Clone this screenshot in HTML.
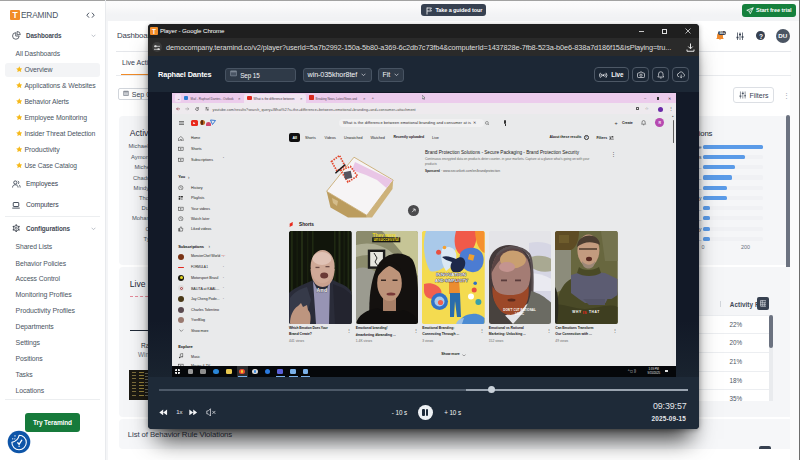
<!DOCTYPE html>
<html lang="en"><head><meta charset="utf-8"><title>Teramind - Player</title>
<style>
html,body{margin:0;padding:0}
body{width:800px;height:460px;overflow:hidden;position:relative;background:#fff;font-family:"Liberation Sans", sans-serif;}
div,span,svg{position:absolute;box-sizing:border-box}
span{white-space:nowrap;line-height:1.12}
</style></head>
<body>
<div style="left:0px;top:0px;width:800px;height:460px;background:#ffffff;"></div>
<div style="left:105.5px;top:0px;width:694.5px;height:460px;background:#f4f5f7;"></div>
<div style="left:108px;top:20.5px;width:682px;height:440px;background:#ffffff;"></div>
<div style="left:790px;top:20.5px;width:10px;height:440px;background:#fbfbfc;"></div>
<div style="left:105.5px;top:0px;width:694.5px;height:20.5px;background:linear-gradient(#fcfcfd 0,#f9f9fa 35%,#f2f3f5 70%,#f2f3f5 100%);"></div>
<div style="left:0px;top:0px;width:800px;height:1px;background:#a2a2a2;"></div>
<div style="left:799.2px;top:0px;width:0.8px;height:460px;background:#6e6e6e;"></div>
<div style="left:104.5px;top:0px;width:1px;height:460px;background:#e8eaed;"></div>
<div style="left:420.7px;top:4px;width:65.5px;height:12.3px;background:#374151;border-radius:3px;"></div>
<svg style="left:426px;top:6.5px" width="7" height="8" viewBox="0 0 14 16"><path d="M2 1v14M2 2h9l-2.5 3L11 8H2" fill="none" stroke="#fff" stroke-width="1.6"/></svg>
<span style="top:7.18px;font-size:5.5px;color:#ffffff;font-weight:700;left:435.4px;letter-spacing:-0.081px;">Take a guided tour</span>
<div style="left:741.8px;top:4px;width:53.8px;height:12.5px;background:#15803d;border-radius:3px;"></div>
<svg style="left:746px;top:6.5px" width="8" height="8" viewBox="0 0 16 16"><path d="M14.5 1.5L1.5 6.5l5 2 2 5z M6.5 8.5l8-7" fill="none" stroke="#fff" stroke-width="1.5" stroke-linejoin="round"/></svg>
<span style="top:7.23px;font-size:5.63px;color:#ffffff;font-weight:700;left:756px;letter-spacing:-0.069px;">Start free trial</span>
<div style="left:10px;top:9.6px;width:10px;height:10px;background:#f28c28;border-radius:1px;"></div>
<span style="top:10.79px;font-size:8.5px;color:#ffffff;font-weight:700;left:12.6px;">T</span>
<span style="top:10.92px;font-size:8.28px;color:#4b5563;left:21px;letter-spacing:-0.163px;">ERAMIND</span>
<svg style="left:85.5px;top:11.5px" width="9" height="6.4" viewBox="0 0 18 13"><path d="M6 1.5L1.5 6.5 6 11.5M12 1.5l4.5 5-4.5 5" fill="none" stroke="#374151" stroke-width="1.8"/></svg>
<svg style="left:12px;top:30.8px" width="8.8" height="8.8" viewBox="0 0 16 16"><path d="M6.8 3A6 6 0 1013 9.2H6.8z" fill="none" stroke="#454b56" stroke-width="1.5" stroke-linejoin="round"/><path d="M9.3 0.9v5.8h5.8A5.8 5.8 0 009.3 0.9z" fill="none" stroke="#454b56" stroke-width="1.5" stroke-linejoin="round"/></svg>
<span style="top:32.46px;font-size:6.31px;color:#454b56;font-weight:700;left:26px;letter-spacing:-0.109px;">Dashboards</span>
<svg style="left:90.6px;top:33.6px" width="5" height="3.4" viewBox="0 0 10 7"><path d="M1 1.5l4 4 4-4" fill="none" stroke="#9ca3af" stroke-width="1.4"/></svg>
<span style="top:50.02px;font-size:6.75px;color:#4b5563;left:15.6px;letter-spacing:-0.098px;">All Dashboards</span>
<div style="left:5px;top:63px;width:94.5px;height:13.6px;background:#f3f4f6;border-radius:3px;"></div>
<svg style="left:15.6px;top:66.19999999999999px" width="6.6" height="6.3" viewBox="0 0 20 19"><path d="M10 0.5l2.9 6 6.6 0.9-4.8 4.6 1.2 6.5L10 15.4 4.1 18.5l1.2-6.5L0.5 7.4l6.6-0.9z" fill="#f6b91a"/></svg>
<span style="top:66.42px;font-size:6.92px;color:#4b5563;left:24.4px;letter-spacing:-0.108px;">Overview</span>
<svg style="left:15.6px;top:82.19999999999999px" width="6.6" height="6.3" viewBox="0 0 20 19"><path d="M10 0.5l2.9 6 6.6 0.9-4.8 4.6 1.2 6.5L10 15.4 4.1 18.5l1.2-6.5L0.5 7.4l6.6-0.9z" fill="#f6b91a"/></svg>
<span style="top:82.46px;font-size:6.85px;color:#4b5563;left:24.4px;letter-spacing:-0.096px;">Applications &amp; Websites</span>
<svg style="left:15.6px;top:98px" width="6.6" height="6.3" viewBox="0 0 20 19"><path d="M10 0.5l2.9 6 6.6 0.9-4.8 4.6 1.2 6.5L10 15.4 4.1 18.5l1.2-6.5L0.5 7.4l6.6-0.9z" fill="#f6b91a"/></svg>
<span style="top:98.27px;font-size:6.83px;color:#4b5563;left:24.4px;letter-spacing:-0.092px;">Behavior Alerts</span>
<svg style="left:15.6px;top:114px" width="6.6" height="6.3" viewBox="0 0 20 19"><path d="M10 0.5l2.9 6 6.6 0.9-4.8 4.6 1.2 6.5L10 15.4 4.1 18.5l1.2-6.5L0.5 7.4l6.6-0.9z" fill="#f6b91a"/></svg>
<span style="top:114.25px;font-size:6.87px;color:#4b5563;left:24.4px;letter-spacing:-0.102px;">Employee Monitoring</span>
<svg style="left:15.6px;top:130px" width="6.6" height="6.3" viewBox="0 0 20 19"><path d="M10 0.5l2.9 6 6.6 0.9-4.8 4.6 1.2 6.5L10 15.4 4.1 18.5l1.2-6.5L0.5 7.4l6.6-0.9z" fill="#f6b91a"/></svg>
<span style="top:130.25px;font-size:6.87px;color:#4b5563;left:24.4px;letter-spacing:-0.091px;">Insider Threat Detection</span>
<svg style="left:15.6px;top:146px" width="6.6" height="6.3" viewBox="0 0 20 19"><path d="M10 0.5l2.9 6 6.6 0.9-4.8 4.6 1.2 6.5L10 15.4 4.1 18.5l1.2-6.5L0.5 7.4l6.6-0.9z" fill="#f6b91a"/></svg>
<span style="top:146.18px;font-size:7px;color:#4b5563;left:24.4px;letter-spacing:-0.082px;">Productivity</span>
<svg style="left:15.6px;top:161.79999999999998px" width="6.6" height="6.3" viewBox="0 0 20 19"><path d="M10 0.5l2.9 6 6.6 0.9-4.8 4.6 1.2 6.5L10 15.4 4.1 18.5l1.2-6.5L0.5 7.4l6.6-0.9z" fill="#f6b91a"/></svg>
<span style="top:162.16px;font-size:6.68px;color:#4b5563;left:24.4px;letter-spacing:-0.102px;">Use Case Catalog</span>
<svg style="left:12.2px;top:180px" width="8.6" height="8" viewBox="0 0 17 16"><circle cx="6.5" cy="5" r="3.2" fill="none" stroke="#3f4957" stroke-width="1.8"/><path d="M1 15c0-3.5 2.4-5.5 5.5-5.5S12 11.5 12 15M11.5 2a3.2 3.2 0 010 6M14 9.8c1.4.8 2.2 2.4 2.2 5.2" fill="none" stroke="#3f4957" stroke-width="1.8"/></svg>
<span style="top:179.96px;font-size:6.67px;color:#374151;left:26px;letter-spacing:-0.11px;">Employees</span>
<svg style="left:12.4px;top:201.6px" width="8" height="7" viewBox="0 0 16 14"><rect x="2.5" y="1" width="11" height="8" rx="1" fill="none" stroke="#3f4957" stroke-width="1.9"/><path d="M0.5 12.2h15" stroke="#3f4957" stroke-width="1.9"/></svg>
<span style="top:201.05px;font-size:6.87px;color:#374151;left:26px;letter-spacing:-0.112px;">Computers</span>
<div style="left:5px;top:216px;width:94.5px;height:0.8px;background:#eceef0;"></div>
<svg style="left:12.2px;top:224px" width="8.4" height="8.4" viewBox="0 0 16 16"><g fill="none" stroke="#454b56" stroke-width="1.5"><circle cx="8" cy="8" r="5"/><circle cx="8" cy="8" r="2"/></g><g fill="#454b56"><rect x="6.7" y="0.5" width="2.6" height="3" rx="0.7" transform="rotate(0 8 8)"/><rect x="6.7" y="0.5" width="2.6" height="3" rx="0.7" transform="rotate(60 8 8)"/><rect x="6.7" y="0.5" width="2.6" height="3" rx="0.7" transform="rotate(120 8 8)"/><rect x="6.7" y="0.5" width="2.6" height="3" rx="0.7" transform="rotate(180 8 8)"/><rect x="6.7" y="0.5" width="2.6" height="3" rx="0.7" transform="rotate(240 8 8)"/><rect x="6.7" y="0.5" width="2.6" height="3" rx="0.7" transform="rotate(300 8 8)"/></g></svg>
<span style="top:225.02px;font-size:6.38px;color:#454b56;font-weight:700;left:26px;letter-spacing:-0.097px;">Configurations</span>
<svg style="left:90.6px;top:226.8px" width="5" height="3.4" viewBox="0 0 10 7"><path d="M1 1.5l4 4 4-4" fill="none" stroke="#9ca3af" stroke-width="1.4"/></svg>
<span style="top:243.22px;font-size:6.75px;color:#4b5563;left:15.6px;letter-spacing:-0.094px;">Shared Lists</span>
<span style="top:259.51px;font-size:6.77px;color:#4b5563;left:15.6px;letter-spacing:-0.092px;">Behavior Policies</span>
<span style="top:275.28px;font-size:6.81px;color:#4b5563;left:15.6px;letter-spacing:-0.098px;">Access Control</span>
<span style="top:291.2px;font-size:6.97px;color:#4b5563;left:15.6px;letter-spacing:-0.091px;">Monitoring Profiles</span>
<span style="top:306.8px;font-size:6.97px;color:#4b5563;left:15.6px;letter-spacing:-0.087px;">Productivity Profiles</span>
<span style="top:323.47px;font-size:6.84px;color:#4b5563;left:15.6px;letter-spacing:-0.107px;">Departments</span>
<span style="top:339.4px;font-size:6.96px;color:#4b5563;left:15.6px;letter-spacing:-0.094px;">Settings</span>
<span style="top:355.46px;font-size:6.86px;color:#4b5563;left:15.6px;letter-spacing:-0.093px;">Positions</span>
<span style="top:371.46px;font-size:6.85px;color:#4b5563;left:15.6px;letter-spacing:-0.105px;">Tasks</span>
<span style="top:387.37px;font-size:6.84px;color:#4b5563;left:15.6px;letter-spacing:-0.098px;">Locations</span>
<div style="left:5px;top:398.6px;width:94.5px;height:0.8px;background:#eceef0;"></div>
<div style="left:24.9px;top:413px;width:55.2px;height:18.8px;background:#167a3b;border-radius:3px;"></div>
<span style="top:418.87px;font-size:6.48px;color:#ffffff;font-weight:700;left:33px;letter-spacing:-0.101px;">Try Teramind</span>
<svg style="left:6.5px;top:429.7px" width="24" height="24" viewBox="0 0 48 48"><circle cx="24" cy="24" r="22.6" fill="#0e55a8"/><path d="M24.3 10.6C23 16.5 19 22.2 9.8 24.8A14.4 14.4 0 1024.3 10.6z" fill="none" stroke="#fff" stroke-width="2.2" stroke-linejoin="round"/><path d="M21.5 25.5l2.7 3.3 5.4-8.4" fill="none" stroke="#fff" stroke-width="2.5" stroke-linecap="round" stroke-linejoin="round"/><circle cx="24.2" cy="32.5" r="1.4" fill="#fff"/><rect x="14.8" y="10.6" width="2.4" height="2.4" fill="#fff"/><rect x="10.3" y="16.6" width="2.2" height="2.2" fill="#fff"/><rect x="14.6" y="16.8" width="2" height="2" fill="#fff"/></svg>
<span style="top:32.03px;font-size:7.86px;color:#374151;left:117px;letter-spacing:-0.127px;">Dashboards</span>
<svg style="left:715.5px;top:31.6px" width="9" height="8.4" viewBox="0 0 18 17"><path d="M8 1.5a6 6 0 00-6 6v3.5l-1.5 3h15L14 11V7.5a6 6 0 00-6-6z" fill="#f0892b"/><path d="M5.8 15a2.3 2.3 0 004.4 0z" fill="#f0892b"/></svg>
<div style="left:718px;top:30.9px;width:8.3px;height:4.4px;background:#374151;border-radius:2.2px;"></div>
<span style="top:31.63px;font-size:3.2px;color:#ffffff;font-weight:700;left:719.6px;">50+</span>
<svg style="left:735.5px;top:31.5px" width="8" height="8.5" viewBox="0 0 16 17"><path d="M3 1v15M8 1v15M13 1v15" stroke="#374151" stroke-width="1.5"/><path d="M1 11h4M6 5h4M11 10h4" stroke="#374151" stroke-width="2.6"/></svg>
<div style="left:756.2px;top:31.2px;width:9.2px;height:9.2px;background:#374151;border-radius:50%;"></div>
<span style="top:32.86px;font-size:6.6px;color:#ffffff;font-weight:700;left:758.9px;">?</span>
<div style="left:775.7px;top:28.7px;width:14.2px;height:14.2px;background:#4b5563;border-radius:50%;"></div>
<span style="top:33.05px;font-size:6.2px;color:#ffffff;font-weight:700;left:778.2px;letter-spacing:0.131px;">DU</span>
<div style="left:116px;top:50.8px;width:675px;height:0.8px;background:#e5e7eb;"></div>
<span style="top:59.48px;font-size:7px;color:#374151;left:122px;letter-spacing:0.032px;">Live Activity</span>
<div style="left:116px;top:74.6px;width:675px;height:0.7px;background:#e9ebee;"></div>
<div style="left:121px;top:74.1px;width:32px;height:1.1px;background:#f28c28;"></div>
<div style="left:118px;top:87.5px;width:60px;height:12.8px;background:#ffffff;border:0.7px solid #d1d5db;border-radius:2px;"></div>
<svg style="left:123px;top:90.4px" width="6" height="6.2" viewBox="0 0 12 12.4"><rect x="0.5" y="1.5" width="11" height="10.4" rx="1.5" fill="#8b9099"/><rect x="1.8" y="4.6" width="8.4" height="6" fill="#c9ccd1"/></svg>
<span style="top:90.98px;font-size:7px;color:#374151;left:131.8px;">Sep 09</span>
<div style="left:732.5px;top:87.4px;width:41.4px;height:15.6px;background:#ffffff;border:0.7px solid #dcdfe4;border-radius:3px;"></div>
<svg style="left:738.5px;top:91.2px" width="7.6" height="8" viewBox="0 0 16 17"><path d="M3 1v15M8 1v15M13 1v15" stroke="#4b5563" stroke-width="1.3"/><path d="M1 11h4M6 5h4M11 10h4" stroke="#4b5563" stroke-width="2.4"/></svg>
<span style="top:92.08px;font-size:7px;color:#374151;left:749.6px;letter-spacing:-0.037px;">Filters</span>
<span style="top:91.78px;font-size:7px;color:#9ca3af;left:783.2px;">⋮</span>
<div style="left:118.5px;top:116px;width:671.5px;height:148.5px;background:#f5f6f8;border-radius:4px 0 0 4px;"></div>
<span style="top:129.04px;font-size:8.6px;color:#1f2937;left:129.8px;">Activity</span>
<span style="top:143.13px;font-size:5.8px;color:#4b5563;left:128.5px;">Michael</span>
<span style="top:154.33px;font-size:5.8px;color:#4b5563;left:131px;">Aymon</span>
<span style="top:164.33px;font-size:5.8px;color:#4b5563;left:134.5px;">Michelle</span>
<span style="top:174.53px;font-size:5.8px;color:#4b5563;left:133px;">Chadwick</span>
<span style="top:184.83px;font-size:5.8px;color:#4b5563;left:133.6px;">Mindy</span>
<span style="top:194.93px;font-size:5.8px;color:#4b5563;left:139px;">Thomas</span>
<span style="top:204.93px;font-size:5.8px;color:#4b5563;left:141.5px;">Duke</span>
<span style="top:215.33px;font-size:5.8px;color:#4b5563;left:132px;">Mohanad</span>
<span style="top:225.73px;font-size:5.8px;color:#4b5563;left:145.5px;">Olivia</span>
<span style="top:235.93px;font-size:5.8px;color:#4b5563;left:143.6px;">Tyler</span>
<span style="top:129.72px;font-size:7.73px;color:#1f2937;left:672px;letter-spacing:-0.104px;">Applications</span>
<div style="left:703px;top:144.5px;width:60px;height:4.2px;background:#f0f1f4;border-radius:1.5px;"></div>
<div style="left:703px;top:144.5px;width:60px;height:4.2px;background:#5b9be8;border-radius:1.5px;"></div>
<div style="left:703px;top:154.9px;width:60px;height:4.2px;background:#f0f1f4;border-radius:1.5px;"></div>
<div style="left:703px;top:154.9px;width:42px;height:4.2px;background:#5b9be8;border-radius:1.5px;"></div>
<div style="left:703px;top:164.9px;width:60px;height:4.2px;background:#f0f1f4;border-radius:1.5px;"></div>
<div style="left:703px;top:164.9px;width:32px;height:4.2px;background:#5b9be8;border-radius:1.5px;"></div>
<div style="left:703px;top:175.4px;width:60px;height:4.2px;background:#f0f1f4;border-radius:1.5px;"></div>
<div style="left:703px;top:175.4px;width:29px;height:4.2px;background:#5b9be8;border-radius:1.5px;"></div>
<div style="left:703px;top:185.5px;width:60px;height:4.2px;background:#f0f1f4;border-radius:1.5px;"></div>
<div style="left:703px;top:185.5px;width:24px;height:4.2px;background:#5b9be8;border-radius:1.5px;"></div>
<div style="left:703px;top:195.9px;width:60px;height:4.2px;background:#f0f1f4;border-radius:1.5px;"></div>
<div style="left:703px;top:195.9px;width:24px;height:4.2px;background:#5b9be8;border-radius:1.5px;"></div>
<div style="left:703px;top:206.1px;width:60px;height:4.2px;background:#f0f1f4;border-radius:1.5px;"></div>
<div style="left:703px;top:206.1px;width:7px;height:4.2px;background:#5b9be8;border-radius:1.5px;"></div>
<div style="left:703px;top:216.3px;width:60px;height:4.2px;background:#f0f1f4;border-radius:1.5px;"></div>
<div style="left:703px;top:216.3px;width:7px;height:4.2px;background:#5b9be8;border-radius:1.5px;"></div>
<div style="left:703px;top:226.5px;width:60px;height:4.2px;background:#f0f1f4;border-radius:1.5px;"></div>
<div style="left:703px;top:226.5px;width:7px;height:4.2px;background:#5b9be8;border-radius:1.5px;"></div>
<div style="left:703px;top:236.70000000000002px;width:60px;height:4.2px;background:#f0f1f4;border-radius:1.5px;"></div>
<div style="left:703px;top:236.70000000000002px;width:7px;height:4.2px;background:#5b9be8;border-radius:1.5px;"></div>
<span style="top:144.02px;font-size:5.6px;color:#4b5563;right:98.39999999999998px;">Google Chrome</span>
<span style="top:154.42px;font-size:5.6px;color:#4b5563;right:98.39999999999998px;">Outlooks</span>
<span style="top:164.42px;font-size:5.6px;color:#4b5563;right:98.39999999999998px;">Microsoft Te...</span>
<span style="top:174.92px;font-size:5.6px;color:#4b5563;right:98.39999999999998px;">Visual Studi...</span>
<span style="top:185.02px;font-size:5.6px;color:#4b5563;right:98.39999999999998px;">Windows Exp...</span>
<span style="top:195.42px;font-size:5.6px;color:#4b5563;right:98.39999999999998px;">Spotify</span>
<span style="top:205.62px;font-size:5.6px;color:#4b5563;right:98.39999999999998px;">Adobe Acrob...</span>
<span style="top:215.82px;font-size:5.6px;color:#4b5563;right:98.39999999999998px;">Microsoft Ex...</span>
<span style="top:226.02px;font-size:5.6px;color:#4b5563;right:98.39999999999998px;">Notepady</span>
<span style="top:236.22px;font-size:5.6px;color:#4b5563;right:98.39999999999998px;">Zoom Meeti...</span>
<span style="top:243.82px;font-size:5.4px;color:#6b7280;left:701.6px;">0</span>
<span style="top:243.82px;font-size:5.4px;color:#6b7280;left:741px;">200</span>
<div style="left:786px;top:115px;width:3.6px;height:175px;background:#6b7280;border-radius:2px;"></div>
<div style="left:118.5px;top:267px;width:671.5px;height:149.5px;background:#f5f6f8;border-radius:4px 0 0 4px;"></div>
<span style="top:280.04px;font-size:8.6px;color:#1f2937;left:129.8px;">Live Montage</span>
<div style="left:130px;top:296.4px;width:250px;height:0.7px;background:transparent;border-top:0.7px dashed #e58a9a;"></div>
<div style="left:129.8px;top:329.5px;width:120px;height:1.1px;background:#1f2937;"></div>
<span style="top:341.56px;font-size:6.6px;color:#1f2937;left:141px;">Raphael Dantes</span>
<span style="top:350.86px;font-size:6.4px;color:#6b7280;left:138px;">Windows 10</span>
<div style="left:129.3px;top:369.5px;width:50px;height:30px;background:#1c1a14;"></div>
<div style="left:131.5px;top:372px;width:4px;height:0.8px;background:#7a6c3c;"></div>
<div style="left:139px;top:372px;width:5px;height:0.8px;background:#94803a;"></div>
<div style="left:145px;top:372.5px;width:3px;height:0.8px;background:#6a6a60;"></div>
<div style="left:131.5px;top:375px;width:4px;height:0.8px;background:#7a6c3c;"></div>
<div style="left:139px;top:375px;width:5px;height:0.8px;background:#94803a;"></div>
<div style="left:145px;top:375.5px;width:3px;height:0.8px;background:#6a6a60;"></div>
<div style="left:131.5px;top:378px;width:4px;height:0.8px;background:#7a6c3c;"></div>
<div style="left:139px;top:378px;width:5px;height:0.8px;background:#94803a;"></div>
<div style="left:145px;top:378.5px;width:3px;height:0.8px;background:#6a6a60;"></div>
<div style="left:131.5px;top:381.5px;width:4px;height:0.8px;background:#7a6c3c;"></div>
<div style="left:139px;top:381.5px;width:5px;height:0.8px;background:#94803a;"></div>
<div style="left:145px;top:382px;width:3px;height:0.8px;background:#6a6a60;"></div>
<div style="left:131.5px;top:384.5px;width:4px;height:0.8px;background:#7a6c3c;"></div>
<div style="left:139px;top:384.5px;width:5px;height:0.8px;background:#94803a;"></div>
<div style="left:145px;top:385px;width:3px;height:0.8px;background:#6a6a60;"></div>
<div style="left:131.5px;top:388px;width:4px;height:0.8px;background:#7a6c3c;"></div>
<div style="left:139px;top:388px;width:5px;height:0.8px;background:#94803a;"></div>
<div style="left:145px;top:388.5px;width:3px;height:0.8px;background:#6a6a60;"></div>
<div style="left:131.5px;top:391px;width:4px;height:0.8px;background:#7a6c3c;"></div>
<div style="left:139px;top:391px;width:5px;height:0.8px;background:#94803a;"></div>
<div style="left:145px;top:391.5px;width:3px;height:0.8px;background:#6a6a60;"></div>
<div style="left:131.5px;top:394.5px;width:4px;height:0.8px;background:#7a6c3c;"></div>
<div style="left:139px;top:394.5px;width:5px;height:0.8px;background:#94803a;"></div>
<div style="left:145px;top:395px;width:3px;height:0.8px;background:#6a6a60;"></div>
<div style="left:560px;top:314.5px;width:209px;height:86.5px;background:#ffffff;"></div>
<span style="top:301.1px;font-size:6.3px;color:#3f4856;font-weight:700;left:729.8px;letter-spacing:0.065px;">Activity Rate</span>
<div style="left:720.3px;top:300.5px;width:0.7px;height:6.5px;background:#d1d5db;"></div>
<div style="left:560px;top:314.5px;width:209px;height:0.7px;background:#eceef1;"></div>
<div style="left:560px;top:333px;width:209px;height:0.7px;background:#eceef1;"></div>
<div style="left:560px;top:351.8px;width:209px;height:0.7px;background:#eceef1;"></div>
<div style="left:560px;top:370.5px;width:209px;height:0.7px;background:#eceef1;"></div>
<div style="left:560px;top:389.2px;width:209px;height:0.7px;background:#eceef1;"></div>
<span style="top:320.9px;font-size:6.3px;color:#4b5563;left:729.5px;">22%</span>
<span style="top:339.3px;font-size:6.3px;color:#4b5563;left:729.5px;">20%</span>
<span style="top:357.9px;font-size:6.3px;color:#4b5563;left:729.5px;">21%</span>
<span style="top:376.6px;font-size:6.3px;color:#4b5563;left:729.5px;">18%</span>
<span style="top:395.1px;font-size:6.3px;color:#4b5563;left:729.5px;">35%</span>
<div style="left:756.8px;top:297px;width:12.6px;height:12.6px;background:#374151;border-radius:2px;"></div>
<svg style="left:759.8px;top:300px" width="6.6" height="6.6" viewBox="0 0 13 13"><rect x="0.7" y="0.7" width="11.6" height="11.6" rx="1" fill="none" stroke="#e5e7eb" stroke-width="1.3"/><path d="M0.7 4.5h11.6M0.7 8.5h11.6M4.5 0.7v11.6M8.5 4.5v7.8" stroke="#e5e7eb" stroke-width="1.1"/></svg>
<div style="left:769px;top:314.5px;width:3.6px;height:86.5px;background:#e9ebee;"></div>
<div style="left:769px;top:315px;width:3.6px;height:33px;background:#6b7280;border-radius:2px;"></div>
<div style="left:118.5px;top:419px;width:671.5px;height:29.8px;background:#f6f7f9;border-radius:4px 0 0 4px;"></div>
<span style="top:430.84px;font-size:7.79px;color:#374151;left:127.8px;letter-spacing:-0.101px;">List of Behavior Rule Violations</span>
<div style="left:758.7px;top:446.4px;width:12.8px;height:3px;background:#374151;border-radius:2px 2px 0 0;"></div>
<div style="left:147.5px;top:23.5px;width:551.3px;height:405.7px;border-radius:4px;box-shadow:0 18px 22px -8px rgba(0,0,0,.8),0 1px 5px rgba(0,0,0,.3);background:#111827;overflow:hidden">
<div style="left:0px;top:0px;width:551.3px;height:14.6px;background:#1f1f1f;"></div>
<div style="left:2.5px;top:3.3px;width:7.6px;height:8px;background:#f28c28;border-radius:1px;"></div>
<span style="top:4.43px;font-size:6.4px;color:#ffffff;font-weight:700;left:4.6px;">T</span>
<span style="top:4.77px;font-size:6.16px;color:#ffffff;left:12.5px;letter-spacing:-0.091px;">Player - Google Chrome</span>
<div style="left:491.1px;top:7.3px;width:5px;height:0.8px;background:#c8c8c8;"></div>
<div style="left:514.3px;top:5.1px;width:5.4px;height:5.4px;background:transparent;border:0.8px solid #e0e0e0;"></div>
<svg style="left:537.1px;top:4.8px" width="6" height="6" viewBox="0 0 12 12"><path d="M1 1l10 10M11 1L1 11" stroke="#ececec" stroke-width="1.5"/></svg>
<div style="left:0px;top:14.5px;width:551.3px;height:18px;background:#2a2a2a;"></div>
<div style="left:4px;top:18.9px;width:10px;height:10px;background:#3c3c3c;border-radius:50%;"></div>
<svg style="left:6px;top:21.1px" width="6" height="5.6" viewBox="0 0 12 11"><path d="M0 2.5h12M0 8.5h12" stroke="#dcdcdc" stroke-width="1.6"/><rect x="1" y="0.5" width="4" height="4" rx="1" fill="#dcdcdc"/><rect x="7" y="6.5" width="4" height="4" rx="1" fill="#dcdcdc"/></svg>
<span style="top:20.78px;font-size:7.34px;color:#dedede;left:18.5px;letter-spacing:-0.11px;">democompany.teramind.co/v2/player?userId=5a7b2992-150a-5b80-a369-6c2db7c73fb4&amp;computerId=1437828e-7fb8-523a-b0e6-838a7d186f15&amp;isPlaying=tru...</span>
<svg style="left:538.9px;top:19.8px" width="9" height="9" viewBox="0 0 18 18"><path d="M9 1v10M4.5 7L9 11.5 13.5 7M2 13v3.5h14V13" fill="none" stroke="#e8e8e8" stroke-width="2"/></svg>
<div style="left:0px;top:32.5px;width:551.3px;height:36.3px;background:#1c2735;"></div>
<span style="top:47.83px;font-size:7.35px;color:#ffffff;font-weight:700;left:10.5px;letter-spacing:-0.118px;">Raphael Dantes</span>
<div style="left:77.5px;top:44px;width:71px;height:14.3px;background:#2f3a48;border:0.7px solid #475362;border-radius:3px;"></div>
<svg style="left:82.5px;top:46.9px" width="7" height="6.6" viewBox="0 0 14 13"><rect x="0.5" y="1" width="13" height="11.5" rx="1.5" fill="#7d8794"/><rect x="2" y="4.6" width="10" height="6.4" fill="#4a5564"/></svg>
<span style="top:48.32px;font-size:6.36px;color:#f3f4f6;left:92.7px;letter-spacing:-0.109px;">Sep 15</span>
<div style="left:155.5px;top:44px;width:68.8px;height:14.3px;background:#2f3a48;border:0.7px solid #475362;border-radius:3px;"></div>
<span style="top:47.87px;font-size:7.18px;color:#f3f4f6;left:160.1px;letter-spacing:-0.102px;">win-035khor8tef</span>
<svg style="left:213.9px;top:49.9px" width="5" height="3.4" viewBox="0 0 10 7"><path d="M1 1.5l4 4 4-4" fill="none" stroke="#d1d5db" stroke-width="1.5"/></svg>
<div style="left:230.5px;top:44px;width:26.2px;height:14.3px;background:#2f3a48;border:0.7px solid #475362;border-radius:3px;"></div>
<span style="top:47.94px;font-size:7.05px;color:#f3f4f6;left:235.1px;letter-spacing:-0.078px;">Fit</span>
<svg style="left:246.9px;top:49.9px" width="5" height="3.4" viewBox="0 0 10 7"><path d="M1 1.5l4 4 4-4" fill="none" stroke="#d1d5db" stroke-width="1.5"/></svg>
<div style="left:446px;top:43.5px;width:35.6px;height:15.4px;background:transparent;border:0.8px solid #4d5866;border-radius:4px;"></div>
<svg style="left:451.7px;top:48.3px" width="8.4" height="6.6" viewBox="0 0 17 13"><circle cx="8.5" cy="6.5" r="2" fill="#e5e7eb"/><path d="M5.5 3.5a4.5 4.5 0 000 6M11.5 3.5a4.5 4.5 0 010 6M3 1.5a7.5 7.5 0 000 10M14 1.5a7.5 7.5 0 010 10" fill="none" stroke="#e5e7eb" stroke-width="1.7"/></svg>
<span style="top:47.74px;font-size:6.29px;color:#f3f4f6;font-weight:700;left:463.7px;letter-spacing:-0.094px;">Live</span>
<div style="left:484.9px;top:43.5px;width:16.8px;height:15.4px;background:transparent;border:0.8px solid #4d5866;border-radius:4px;"></div>
<svg style="left:489.3px;top:47.7px" width="8" height="7" viewBox="0 0 16 14"><path d="M2.5 4h2.3l1.2-2h4l1.2 2h2.3a1.5 1.5 0 011.5 1.5v6a1.5 1.5 0 01-1.5 1.5h-11A1.5 1.5 0 011 11.5v-6A1.5 1.5 0 012.5 4z" fill="none" stroke="#e5e7eb" stroke-width="1.4" stroke-linejoin="round"/><circle cx="8" cy="8.4" r="2.3" fill="none" stroke="#e5e7eb" stroke-width="1.4"/></svg>
<div style="left:504.9px;top:43.5px;width:16.8px;height:15.4px;background:transparent;border:0.8px solid #4d5866;border-radius:4px;"></div>
<svg style="left:509.5px;top:47.3px" width="7.6" height="8" viewBox="0 0 15 16"><path d="M7.5 1.5a4.5 4.5 0 00-4.5 4.5v3.5L1.5 12h12L12 9.5V6a4.5 4.5 0 00-4.5-4.5zM5.8 14h3.4" fill="none" stroke="#e5e7eb" stroke-width="1.4" stroke-linejoin="round"/></svg>
<div style="left:524.9px;top:43.5px;width:16.8px;height:15.4px;background:transparent;border:0.8px solid #4d5866;border-radius:4px;"></div>
<svg style="left:529.1px;top:47.5px" width="8.4" height="7.6" viewBox="0 0 17 15"><path d="M4.5 11.5a3.5 3.5 0 01-.5-7 4.5 4.5 0 018.7.8 3.2 3.2 0 01.3 6.2" fill="none" stroke="#e5e7eb" stroke-width="1.4"/><path d="M8.5 7v6.5M6.2 11.3l2.3 2.3 2.3-2.3" fill="none" stroke="#e5e7eb" stroke-width="1.4"/></svg>
<div style="left:0px;top:68.8px;width:551.3px;height:285px;background:linear-gradient(#121927 0,#121927 80%,#19232f 100%);"></div>
<div style="left:0px;top:353.5px;width:551.3px;height:53px;background:#1e2a38;"></div>
<div style="left:11px;top:365.2px;width:308px;height:1.9px;background:#4d5968;"></div>
<div style="left:318.5px;top:365.2px;width:222px;height:1.9px;background:#9aa4b0;"></div>
<div style="left:340.3px;top:362.5px;width:7.2px;height:7.2px;background:#c9d1da;border-radius:50%;"></div>
<svg style="left:11.7px;top:385.1px" width="8.4" height="6.8" viewBox="0 0 17 14"><path d="M8.5 1v12L0.5 7zM16.5 1v12L8.5 7z" fill="#f3f4f6"/></svg>
<span style="top:385.22px;font-size:6px;color:#e5e7eb;left:28.7px;">1x</span>
<svg style="left:41.9px;top:385.1px" width="8.4" height="6.8" viewBox="0 0 17 14"><path d="M0.5 1v12L8.5 7zM8.5 1v12L16.5 7z" fill="#f3f4f6"/></svg>
<svg style="left:58.5px;top:384.1px" width="10.4" height="8.8" viewBox="0 0 21 18"><path d="M1.5 6h3l4.5-4.5v15L4.5 12h-3z" fill="none" stroke="#e5e7eb" stroke-width="1.5" stroke-linejoin="round"/><path d="M13 6l6 6M19 6l-6 6" stroke="#e5e7eb" stroke-width="1.5"/></svg>
<span style="top:385.31px;font-size:6.31px;color:#f3f4f6;left:244.3px;letter-spacing:-0.079px;">- 10 s</span>
<div style="left:270.5px;top:381.3px;width:14.8px;height:14.8px;background:#eef1f4;border-radius:50%;"></div>
<div style="left:274.8px;top:385.1px;width:2.3px;height:7.2px;background:#1e2a38;border-radius:1px;"></div>
<div style="left:278.7px;top:385.1px;width:2.3px;height:7.2px;background:#1e2a38;border-radius:1px;"></div>
<span style="top:385.32px;font-size:6.29px;color:#f3f4f6;left:296.7px;letter-spacing:-0.087px;">+ 10 s</span>
<span style="top:378.04px;font-size:8.9px;color:#e5e7eb;left:505.5px;letter-spacing:-0.13px;">09:39:57</span>
<span style="top:391.23px;font-size:6.4px;color:#e5e7eb;font-weight:700;left:504.1px;letter-spacing:0.17px;">2025-09-15</span>
<div style="left:24.5px;top:69.5px;width:503.7px;height:284px;background:#e9eaeb;overflow:hidden">
<div style="left:0px;top:0px;width:503.7px;height:10px;background:#ecccec;"></div>
<div style="left:3.4px;top:1.4px;width:6px;height:7.6px;background:#f3e2f3;border-radius:1.5px;"></div>
<span style="top:3.77px;font-size:3.6px;color:#444;left:5.4px;">⌄</span>
<div style="left:12px;top:2.6px;width:4.4px;height:4.4px;background:#2b7cd3;border-radius:1px;"></div>
<span style="top:5.23px;font-size:3.11px;color:#5a4a5a;left:18.6px;letter-spacing:-0.043px;">Mail - Raphael Dantes - Outlook</span>
<span style="top:5.07px;font-size:3.4px;color:#444;left:65.6px;">✕</span>
<div style="left:72px;top:1.2px;width:62px;height:9px;background:#f1e6f1;border-radius:2px 2px 0 0;"></div>
<div style="left:75px;top:3.3px;width:4.6px;height:3.4px;background:#e02a20;border-radius:1px;"></div>
<span style="top:5.25px;font-size:3.08px;color:#4a3a4a;left:81.6px;letter-spacing:-0.042px;">What is the difference between</span>
<span style="top:5.07px;font-size:3.4px;color:#444;left:128px;">✕</span>
<div style="left:136.5px;top:2.4px;width:5px;height:4.8px;background:#d9281e;border-radius:0.8px;"></div>
<span style="top:5.29px;font-size:3.01px;color:#5a4a5a;left:143.6px;letter-spacing:-0.095px;">Breaking News, Latest News and</span>
<span style="top:5.07px;font-size:3.4px;color:#444;left:190.6px;">✕</span>
<span style="top:3.39px;font-size:4.4px;color:#444;left:199.6px;">+</span>
<span style="top:3.48px;font-size:4px;color:#333;left:472px;">–</span>
<div style="left:484.6px;top:4.2px;width:2.6px;height:2.6px;background:transparent;border:0.6px solid #333;"></div>
<span style="top:3.77px;font-size:3.6px;color:#333;left:495.6px;">✕</span>
<div style="left:0px;top:10px;width:503.7px;height:10.6px;background:#eeeaee;"></div>
<svg style="left:250px;top:1.8px" width="3.4" height="5" viewBox="0 0 7 10"><path d="M0.5 0.5v7.5l2-1.8 1.3 3 1.3-.600-1.3-2.9h2.6z" fill="#fff" stroke="#2a2a3a" stroke-width="0.9"/></svg>
<svg style="left:3.6px;top:14.4px" width="4.4" height="3.8" viewBox="0 0 9 8"><path d="M8.5 4H1M4 1L1 4l3 3" fill="none" stroke="#8a2a3a" stroke-width="1.3"/></svg>
<svg style="left:13px;top:14.4px" width="4.4" height="3.8" viewBox="0 0 9 8"><path d="M0.5 4H8M5 1l3 3-3 3" fill="none" stroke="#8e8e8e" stroke-width="1.2"/></svg>
<svg style="left:22.6px;top:14.2px" width="4.2" height="4.2" viewBox="0 0 9 9"><path d="M7.5 4.5a3 3 0 11-1-2.3M7.5 0.5v2.5H5" fill="none" stroke="#333" stroke-width="1.3"/></svg>
<svg style="left:33.2px;top:14.4px" width="4.2" height="3.8" viewBox="0 0 9 8"><path d="M0.5 2h8M0.5 6h8" stroke="#444" stroke-width="1"/><circle cx="3" cy="2" r="1.3" fill="#444"/><circle cx="6" cy="6" r="1.3" fill="#444"/></svg>
<span style="top:14.57px;font-size:3.6px;color:#4a4a4a;left:40.6px;letter-spacing:0.069px;">youtube.com/results?search_query=What%27s+the+difference+between+emotional+branding+and+consumer+attachment</span>
<div style="left:463.6px;top:14.2px;width:3.4px;height:3px;background:transparent;border:0.6px solid #555;border-radius:0.6px;"></div>
<span style="top:14.28px;font-size:4px;color:#555;left:473px;">☆</span>
<div style="left:485.6px;top:14px;width:5.2px;height:5.2px;background:#6a2aa8;border-radius:50%;"></div>
<span style="top:14.09px;font-size:4.4px;color:#555;left:496.5px;">⋮</span>
<svg style="left:6.6px;top:28.2px" width="5" height="4" viewBox="0 0 10 8"><path d="M0 1h10M0 4h10M0 7h10" stroke="#333" stroke-width="1.2"/></svg>
<div style="left:18.6px;top:27.2px;width:7.4px;height:5.4px;background:#e8291c;border-radius:1.5px;"></div>
<svg style="left:21.3px;top:28.6px" width="2.6" height="2.6" viewBox="0 0 5 5"><path d="M0.5 0l4 2.5-4 2.5z" fill="#fff"/></svg>
<div style="left:27.7px;top:26.6px;width:5.6px;height:5.6px;background:#b8681c;border-radius:50%;"></div>
<div style="left:29px;top:27px;width:2px;height:5px;background:#5a2a10;border-radius:1px;"></div>
<div style="left:33.6px;top:29px;width:5.2px;height:4.2px;background:#d0456a;border-radius:50% 50% 10% 10%;"></div>
<svg style="left:38px;top:25.8px" width="6" height="6" viewBox="0 0 12 12"><path d="M1 2l10 1-6 8z" fill="none" stroke="#2a6fd0" stroke-width="1.8"/></svg>
<div style="left:167px;top:25.8px;width:145px;height:8.4px;background:#f1f1f2;border-radius:4.2px;"></div>
<span style="top:28.13px;font-size:3.9px;color:#2a2a2a;left:171px;letter-spacing:0.096px;">What is the difference between emotional branding and consumer at is</span>
<span style="top:27.98px;font-size:4.2px;color:#333;left:301.4px;">✕</span>
<svg style="left:312.6px;top:27.8px" width="4.8" height="4.8" viewBox="0 0 10 10"><circle cx="4" cy="4" r="3" fill="none" stroke="#444" stroke-width="1"/><path d="M6.3 6.3L9.5 9.5" stroke="#444" stroke-width="1"/></svg>
<div style="left:332px;top:27.4px;width:2px;height:3.8px;background:#333;border-radius:1px;"></div>
<div style="left:332.6px;top:31px;width:0.8px;height:1.6px;background:#333;"></div>
<span style="top:27.21px;font-size:5.4px;color:#333;left:442.5px;">+</span>
<span style="top:28.08px;font-size:3.59px;color:#222;font-weight:700;left:450px;letter-spacing:-0.056px;">Create</span>
<svg style="left:469.4px;top:27px" width="5.2" height="5.6" viewBox="0 0 15 16"><path d="M7.5 1.5a4.5 4.5 0 00-4.5 4.5v3.5L1.5 12h12L12 9.5V6a4.5 4.5 0 00-4.5-4.5zM5.8 14h3.4" fill="none" stroke="#333" stroke-width="1.5"/></svg>
<div style="left:483.1px;top:25.4px;width:9px;height:9px;background:#b64ab0;border-radius:50%;"></div>
<span style="top:28.27px;font-size:3.6px;color:#f6e6f6;font-weight:700;left:486.6px;">R</span>
<div style="left:499.6px;top:22px;width:3.4px;height:250px;background:#e8e8e9;"></div>
<div style="left:500.6px;top:26.6px;width:1.8px;height:23.4px;background:#5e5e5e;border-radius:1px;"></div>
<span style="top:22.16px;font-size:3px;color:#555;left:500.2px;">▴</span>
<div style="left:117.4px;top:40px;width:10.6px;height:9px;background:#0f0f0f;border-radius:2px;"></div>
<span style="top:42.82px;font-size:3.7px;color:#ffffff;font-weight:700;left:120.4px;">All</span>
<span style="top:42.82px;font-size:3.7px;color:#222;left:133px;letter-spacing:0.021px;">Shorts</span>
<span style="top:42.82px;font-size:3.7px;color:#222;left:152.5px;letter-spacing:0.03px;">Videos</span>
<span style="top:42.82px;font-size:3.7px;color:#222;left:172px;letter-spacing:0.016px;">Unwatched</span>
<span style="top:42.82px;font-size:3.7px;color:#222;left:198.5px;letter-spacing:-0.003px;">Watched</span>
<span style="top:42.91px;font-size:3.54px;color:#222;font-weight:700;left:221.6px;letter-spacing:-0.055px;">Recently uploaded</span>
<span style="top:42.82px;font-size:3.7px;color:#222;left:260px;letter-spacing:0.009px;">Live</span>
<span style="top:42.9px;font-size:3.54px;color:#222;font-weight:700;left:377.5px;letter-spacing:-0.052px;">About these results</span>
<div style="left:412px;top:42.2px;width:4.8px;height:4.8px;background:transparent;border:0.6px solid #333;border-radius:50%;"></div>
<span style="top:42.97px;font-size:3.4px;color:#333;font-weight:700;left:413.8px;">i</span>
<span style="top:42.87px;font-size:3.6px;color:#222;font-weight:700;left:424.4px;letter-spacing:0px;">Filters</span>
<svg style="left:437.4px;top:42.6px" width="4.8" height="4.2" viewBox="0 0 10 9"><path d="M0 1.5h10M0 4.5h10M0 7.5h10" stroke="#333" stroke-width="0.9"/><rect x="6" y="0" width="2" height="3" fill="#333"/><rect x="2" y="3" width="2" height="3" fill="#333"/></svg>
<svg style="left:6.4px;top:42.8px" width="5.6" height="5.6" viewBox="0 0 12 12"><path d="M1 5.5L6 1l5 4.5V11H7.5V7.5h-3V11H1z" fill="none" stroke="#333" stroke-width="1.1"/></svg>
<span style="top:43.94px;font-size:3.49px;color:#222;left:19px;letter-spacing:-0.07px;">Home</span>
<svg style="left:6.4px;top:53.4px" width="5.6" height="5.6" viewBox="0 0 12 12"><rect x="1" y="2.5" width="10" height="7.5" fill="none" stroke="#333" stroke-width="1.1"/><path d="M5 4.5l3 1.8-3 1.8z" fill="#333"/></svg>
<span style="top:54.42px;font-size:3.7px;color:#222;left:19px;letter-spacing:-0.029px;">Shorts</span>
<svg style="left:6.4px;top:63.8px" width="5.6" height="5.6" viewBox="0 0 12 12"><rect x="1" y="2.5" width="10" height="7.5" fill="none" stroke="#333" stroke-width="1.1"/><path d="M5 4.5l3 1.8-3 1.8z" fill="#333"/></svg>
<span style="top:64.82px;font-size:3.7px;color:#222;left:19px;letter-spacing:-0.011px;">Subscriptions</span>
<span style="top:65.45px;font-size:2.6px;color:#666;left:51px;">•</span>
<span style="top:82.07px;font-size:3.87px;color:#111;font-weight:700;left:6.2px;letter-spacing:-0.07px;">You</span>
<span style="top:81.69px;font-size:4.6px;color:#444;left:16px;">›</span>
<svg style="left:6.4px;top:91.5px" width="5.6" height="5.6" viewBox="0 0 12 12"><circle cx="6" cy="6" r="4.6" fill="none" stroke="#333" stroke-width="1.1"/><path d="M6 3.2V6l2 1.3" fill="none" stroke="#333" stroke-width="1.1"/></svg>
<span style="top:92.52px;font-size:3.7px;color:#222;left:19px;letter-spacing:0.017px;">History</span>
<svg style="left:6.4px;top:102px" width="5.6" height="5.6" viewBox="0 0 12 12"><path d="M1.5 2h3.5v3.5H1.5zM6 2h4.5v3.5H6zM1.5 6.5h3.5V10H1.5z" fill="#333"/><path d="M7.5 7l3 1.8-3 1.8z" fill="#333"/></svg>
<span style="top:103.02px;font-size:3.7px;color:#222;left:19px;letter-spacing:-0.015px;">Playlists</span>
<svg style="left:6.4px;top:112.5px" width="5.6" height="5.6" viewBox="0 0 12 12"><rect x="1" y="2.5" width="10" height="7.5" fill="none" stroke="#333" stroke-width="1.1"/><path d="M5 4.5l3 1.8-3 1.8z" fill="#333"/></svg>
<span style="top:113.52px;font-size:3.7px;color:#222;left:19px;letter-spacing:-0.013px;">Your videos</span>
<svg style="left:6.4px;top:122.8px" width="5.6" height="5.6" viewBox="0 0 12 12"><circle cx="6" cy="6" r="4.6" fill="none" stroke="#333" stroke-width="1.1"/><path d="M6 3.2V6l2 1.3" fill="none" stroke="#333" stroke-width="1.1"/></svg>
<span style="top:123.82px;font-size:3.7px;color:#222;left:19px;letter-spacing:-0.011px;">Watch later</span>
<svg style="left:6.4px;top:133.2px" width="5.6" height="5.6" viewBox="0 0 12 12"><path d="M1 5.5h2.5V11H1zM3.5 5.5L6 1.5c1 0 1.5.800 1.2 1.8L6.8 5H10.5l-1 6H3.5z" fill="none" stroke="#333" stroke-width="1.1"/></svg>
<span style="top:134.22px;font-size:3.7px;color:#222;left:19px;letter-spacing:-0.008px;">Liked videos</span>
<span style="top:151.51px;font-size:3.99px;color:#111;font-weight:700;left:6.2px;letter-spacing:-0.061px;">Subscriptions</span>
<span style="top:151.19px;font-size:4.6px;color:#444;left:36.5px;">›</span>
<div style="left:6.3px;top:160.6px;width:6px;height:6px;background:#7a3416;border-radius:50%;"></div>
<span style="top:161.94px;font-size:3.49px;color:#222;left:19px;letter-spacing:-0.053px;">MonsterChef World</span>
<div style="left:6.3px;top:171.3px;width:6px;height:6px;background:#e8e8ea;border-radius:50%;"></div>
<span style="top:172.81px;font-size:3.18px;color:#222;left:19px;letter-spacing:-0.109px;">FORMULA 1</span>
<div style="left:6.3px;top:181.7px;width:6px;height:6px;background:#1a1a10;border-radius:50%;"></div>
<span style="top:182.92px;font-size:3.7px;color:#222;left:19px;letter-spacing:-0.028px;">Motorsport Brasil</span>
<div style="left:6.3px;top:192.4px;width:6px;height:6px;background:#ddd;border-radius:50%;"></div>
<span style="top:193.69px;font-size:3.58px;color:#222;left:19px;letter-spacing:-0.051px;">BALITA at KAAL...</span>
<div style="left:6.3px;top:203px;width:6px;height:6px;background:#4a3a18;border-radius:50%;"></div>
<span style="top:204.3px;font-size:3.57px;color:#222;left:19px;letter-spacing:-0.052px;">Jay Cheng Pode...</span>
<div style="left:6.3px;top:213.5px;width:6px;height:6px;background:#5a4a50;border-radius:50%;"></div>
<span style="top:214.72px;font-size:3.7px;color:#222;left:19px;letter-spacing:-0.026px;">Charles Tolentino</span>
<div style="left:6.3px;top:223.7px;width:6px;height:6px;background:#9a7a70;border-radius:50%;"></div>
<span style="top:225px;font-size:3.57px;color:#222;left:19px;letter-spacing:-0.054px;">YserBlog</span>
<div style="left:6.3px;top:173.7px;width:6px;height:1.4px;background:#e02a20;border-radius:1px;"></div>
<div style="left:7.7px;top:183px;width:3.2px;height:3.2px;background:#e8d820;border-radius:50%;"></div>
<div style="left:7.5px;top:193.6px;width:3.6px;height:3.6px;background:transparent;border:0.7px solid #b04040;border-radius:50%;"></div>
<span style="top:162.55px;font-size:2.4px;color:#555;left:51px;">•</span>
<span style="top:173.25px;font-size:2.4px;color:#555;left:51px;">•</span>
<span style="top:183.65px;font-size:2.4px;color:#555;left:51px;">•</span>
<span style="top:194.35px;font-size:2.4px;color:#555;left:51px;">•</span>
<span style="top:204.95px;font-size:2.4px;color:#555;left:51px;">•</span>
<span style="top:162.45px;font-size:2.4px;color:#d04040;left:49.2px;">((•))</span>
<svg style="left:7px;top:235.8px" width="4.6" height="3" viewBox="0 0 10 6"><path d="M1 1l4 4 4-4" fill="none" stroke="#333" stroke-width="1.1"/></svg>
<span style="top:235.6px;font-size:3.56px;color:#222;left:19px;letter-spacing:-0.06px;">Show more</span>
<span style="top:251.57px;font-size:4.05px;color:#111;font-weight:700;left:6.2px;letter-spacing:-0.064px;">Explore</span>
<svg style="left:6.4px;top:260.4px" width="5.6" height="5.6" viewBox="0 0 12 12"><path d="M5 9.5V2l5-1v7" fill="none" stroke="#333" stroke-width="1.1"/><circle cx="3.6" cy="9.6" r="1.6" fill="#333"/><circle cx="8.6" cy="8.2" r="1.5" fill="#333"/></svg>
<span style="top:261.5px;font-size:3.56px;color:#222;left:19px;letter-spacing:-0.056px;">Music</span>
<svg style="left:6.4px;top:270.4px" width="5.6" height="5.6" viewBox="0 0 12 12"><rect x="1" y="2.5" width="10" height="7.5" fill="none" stroke="#333" stroke-width="1.1"/><path d="M5 4.5l3 1.8-3 1.8z" fill="#333"/></svg>
<span style="top:271.84px;font-size:3.48px;color:#222;left:19px;letter-spacing:-0.053px;">Movies &amp; TV</span>
<svg style="left:148px;top:57px" width="80" height="67.5" viewBox="0 0 80 67.5"><path d="M6.6 41.3L10.5 57.5 28 67.5H46.8V65.3z" fill="#bb9c5e"/><path d="M46.8 65.3L73.2 30.1 72.5 39 52 67.5H46.8z" fill="#cdb27a"/><path d="M6.6 41.3L34 7.2 73.2 30.1 46.8 65.3z" fill="#f6f4f5" stroke="#c9ad74" stroke-width="0.9" stroke-linejoin="round"/><path d="M35 12L72.5 30.3 66.5 38 57 30 46 25 32 20z" fill="#e9c6e6"/><path d="M11.5 11.5l8-6 5.5 10.5-8 5z" fill="none" stroke="#e2482e" stroke-width="1.7" stroke-dasharray="1.5 1.1"/><path d="M20.5 20.5l10-4 7 9.5-9.5 6z" fill="none" stroke="#e2482e" stroke-width="1.7" stroke-dasharray="1.5 1.1"/><rect x="24.2" y="21.3" width="7.4" height="7.4" fill="#55555f" transform="rotate(-12 28 25)"/><path d="M15.4 23.3L25.2 14.5" stroke="#1a1a1a" stroke-width="1.5"/><path d="M12 48l6 3-1 5-4-3z" fill="#d4bc8a"/></svg>
<div style="left:235.6px;top:112px;width:11px;height:11px;background:#4a4a4c;border-radius:50%;"></div>
<svg style="left:238.5px;top:114.9px" width="5.2" height="5.2" viewBox="0 0 10 10"><path d="M2 8l6-6M3.5 2H8v4.5" fill="none" stroke="#fff" stroke-width="1.3"/></svg>
<span style="top:57.44px;font-size:4.7px;color:#1a1a1a;left:253px;letter-spacing:-0.014px;">Brand Protection Solutions - Secure Packaging - Brand Protection Security</span>
<span style="top:65.23px;font-size:3.28px;color:#6a6a6a;left:253px;letter-spacing:-0.044px;">Continuous encrypted data on products deter counter- in your markets. Capture at a glance what’s going on with your</span>
<span style="top:70.11px;font-size:3.1px;color:#6a6a6a;left:253px;">products</span>
<span style="top:77.22px;font-size:2.92px;color:#222;font-weight:700;left:253px;letter-spacing:-0.051px;">Sponsored</span>
<span style="top:77.02px;font-size:3.3px;color:#555;left:269px;letter-spacing:-0.014px;">· www.securikett.com/en/brandprotection</span>
<span style="top:59.19px;font-size:4.6px;color:#444;left:439.3px;">⋮</span>
<svg style="left:117.4px;top:128.6px" width="4.4" height="5" viewBox="0 0 9 10"><path d="M6.5 0.5L2 3c-1.6 1-1 3 .5 3L1.5 7c-1.6 1-.5 3 1.5 2.3L7 7c1.6-1 1-3-.5-3l1-1c1.6-1 .5-3.2-1-2.5z" fill="#e8291c"/></svg>
<span style="top:128.94px;font-size:4.7px;color:#111;font-weight:700;left:127px;letter-spacing:0.023px;">Shorts</span>
<svg style="left:117.1px;top:137.7px;border-radius:2.5px" width="62.5" height="92.9" viewBox="0 0 62.5 92.9"><rect width="62.5" height="92.9" fill="#11150b"/><g style="filter:blur(0.5px)"><rect width="62.5" height="92.9" fill="#11150b"/><rect x="2" y="0" width="1.8" height="60" fill="#1f2912"/><rect x="7.5" y="0" width="1.2" height="60" fill="#19210f"/><rect x="12" y="0" width="2" height="60" fill="#222c14"/><rect x="18" y="0" width="1.4" height="60" fill="#1a220f"/><rect x="23" y="0" width="1.6" height="60" fill="#1f2912"/><rect x="45" y="0" width="1.6" height="60" fill="#1f2912"/><rect x="49.5" y="0" width="2" height="60" fill="#232d15"/><rect x="54.5" y="0" width="1.3" height="60" fill="#1a220f"/><rect x="58.5" y="0" width="1.8" height="60" fill="#202a13"/><path d="M0 92.9V62c4-4 12-8 20-11l6-3h16l8 4c6 2 10 5 12.5 9v31.9z" fill="#2a2c39"/><path d="M1 67c4-6 10-9 17-11l4 13-7 23.9H1z" fill="#363a49"/><path d="M44 53l10 4c3 2 6 4 8.5 7v28.9H46z" fill="#23242f"/><path d="M24 50l4 8h10l3-8-1 42.9H27z" fill="#9794b4"/><path d="M21.6 38c0 9 4 18 12 18S45.6 47 45.6 38z" fill="#c9a18f"/><ellipse cx="33.6" cy="35.5" rx="12" ry="16.5" fill="#cfa997"/><ellipse cx="33" cy="27.5" rx="9.5" ry="6.5" fill="#e0c2b5"/><ellipse cx="35.2" cy="44.5" rx="4" ry="3" fill="#6a3a36"/><rect x="26.5" y="35.8" width="4" height="1.3" fill="#6a4a44"/><rect x="36.5" y="35" width="4" height="1.3" fill="#6a4a44"/><path d="M1 92.9c0-8 3-15 8-18l3-3 2 4 4-2 1 5c3 3 3 8 2 14z" fill="#bd957f"/></g><text x="27.6" y="61" font-size="5" font-weight="700" fill="#fff" stroke="#222" stroke-width="0.4" paint-order="stroke" textLength="10.4" font-family="Liberation Sans, sans-serif">And</text></svg>
<svg style="left:183.7px;top:137.7px;border-radius:2.5px" width="62.5" height="92.9" viewBox="0 0 62.5 92.9"><rect width="62.5" height="92.9" fill="#8b8b6c"/><g style="filter:blur(0.5px)"><rect width="62.5" height="92.9" fill="#8b8b6c"/><path d="M26 0h36.5v46C54 30 40 14 26 0z" fill="#c6c596"/><path d="M0 14c14-4 30 0 40 12l-6 6C26 24 12 22 0 26z" fill="#aeae94"/><path d="M0 38c8-3 16-1 22 5v49.9H0z" fill="#9b9b90"/><rect x="11.8" y="18.6" width="17.5" height="19.2" fill="#1b1b1b"/><rect x="14.2" y="21" width="12.7" height="14.4" fill="#e6e6df"/><path d="M18 22l3 5-2 4 3 4" stroke="#2a2a2a" stroke-width="1" fill="none"/><path d="M14 92.9c-2-20 0-44 8-59 7-13 25-15 34-6 6 8 6.5 33 6.5 65z" fill="#14110f"/><path d="M27 66h13v14H27z" fill="#a88068"/><ellipse cx="33.5" cy="52" rx="12.3" ry="18" fill="#bd9379"/><path d="M21 46c0-10 6-16 14-15 6 1 10 5 11 12-6-4-10-8-13-8-4 2-8 6-12 11z" fill="#14110f"/><ellipse cx="35" cy="63" rx="4.5" ry="1.6" fill="#7a3a38"/><rect x="25" y="48.5" width="5" height="1.5" fill="#3a2a24"/><rect x="36.5" y="48.5" width="5" height="1.5" fill="#3a2a24"/><path d="M0 92.9c2-9 10-14 22-16l11 6 14-4c8 2 14 6 15.5 14z" fill="#100e0d"/></g><text x="16.6" y="5.7" font-size="4.5" font-weight="700" fill="#ead926" textLength="23.4" lengthAdjust="spacingAndGlyphs" font-family="Liberation Sans, sans-serif">They were</text><rect x="16.2" y="6.3" width="28.1" height="5" fill="#131313"/><text x="17.4" y="10.3" font-size="4.5" font-weight="700" fill="#ead926" textLength="25.8" lengthAdjust="spacingAndGlyphs" font-family="Liberation Sans, sans-serif">unsuccessful</text></svg>
<svg style="left:250.2px;top:137.7px;border-radius:2.5px" width="62.5" height="92.9" viewBox="0 0 62.5 92.9"><rect width="62.5" height="92.9" fill="#f4db50"/><g style="filter:blur(0.5px)"><rect width="62.5" height="92.9" fill="#f4db50"/><path d="M4 0h30c3 10 0 22-6 30-6 8-14 12-20 10C2 30 0 12 4 0z" fill="#a9c9e9"/><path d="M20 18c6-4 12-2 14 4 2 8-4 14-10 18-4-6-6-14-4-22z" fill="#dbe8f3"/><path d="M34 0h20c2 10-2 20-10 24-6 2-10-4-11-10-1-5 0-10 1-14z" fill="#f05a49"/><path d="M53 0h9.5v22c-5-2-9-10-9.5-22z" fill="#f5902e"/><path d="M40 20c6-5 16-4 20 2 3 6 2 14-4 18-6 3-14 0-17-7-2-5-2-10 1-13z" fill="#4c7cd2"/><rect x="46.5" y="23.5" width="5.5" height="5.5" fill="#f0a030" transform="rotate(15 49 26)"/><path d="M2 53c6-2 14 0 17 6 2 5-2 9-8 9-5 0-9-3-9-8z" fill="#f06050"/><circle cx="17.5" cy="70.5" r="8.5" fill="#3172c8"/><circle cx="17.5" cy="70.5" r="5" fill="#a9c9e9"/><circle cx="18.5" cy="71.5" r="2.6" fill="#f06050"/><path d="M36 92.9c2-6 8-10 14-10 6-1 10 2 12.5 4v6z" fill="#4b8bd2"/><path d="M34 92.9c1-3 4-6 8-6l-2 6z" fill="#9cc0e6"/><circle cx="16.6" cy="21.2" r="2.5" fill="#e8503f"/><circle cx="22.5" cy="16.5" r="1.8" fill="#f5a030"/><circle cx="52.2" cy="59.1" r="2.5" fill="#e8503f"/><circle cx="49" cy="65.5" r="3" fill="#fff"/><circle cx="53.2" cy="52.3" r="1.8" fill="#2f6fc2"/><circle cx="56.4" cy="70.9" r="3" fill="#3aa0a8"/><path d="M20 26c4-2 10 0 14 2 4-3 8-2 9 2 1 4-1 9-5 11h-7c-3-3-3-7-1-10-4-1-8-3-10-5z" fill="#1e294a"/><path d="M27 48h10l1 15H27z" fill="#ec8c30"/><path d="M28 62h10l1 24h-4l-2-16-1 16h-4z" fill="#2a6cab"/></g><text x="14" y="45.2" textLength="30" lengthAdjust="spacingAndGlyphs" font-size="4.3" font-weight="700" fill="#fff" stroke="#1a2038" stroke-width="0.6" paint-order="stroke" font-family="Liberation Sans, sans-serif">INNOVATION</text><text x="13" y="51" textLength="33" lengthAdjust="spacingAndGlyphs" font-size="4.3" font-weight="700" fill="#fff" stroke="#1a2038" stroke-width="0.6" paint-order="stroke" font-family="Liberation Sans, sans-serif">AND SIMPLICITY</text></svg>
<svg style="left:316.8px;top:137.7px;border-radius:2.5px" width="62.5" height="92.9" viewBox="0 0 62.5 92.9"><rect width="62.5" height="92.9" fill="#e4e4e8"/><g style="filter:blur(0.5px)"><rect width="62.5" height="92.9" fill="#e4e4e8"/><path d="M40 12c8-2 16-1 22.5 2v78.9H40z" fill="#d6d6e4"/><path d="M42 26c6-2 14-2 20.5 2v12c-8 2-16 0-20.5-4z" fill="#a9a992"/><path d="M40 42c8 0 16 2 22.5 6v12H40z" fill="#eaeaf1"/><path d="M0 30c2-10 10-16 20-16s22 6 23 24l1 32-44 22.9z" fill="#43393a"/><ellipse cx="22" cy="43" rx="19.5" ry="27.5" fill="#a47c74"/><path d="M2.5 42c0-15 9-26 19-26 8 0 14 4 17 12-6-5-13-6-19-4-7 2-12 8-17 18z" fill="#5a4444"/><ellipse cx="24" cy="28.5" rx="13" ry="9" fill="#c99f70"/><ellipse cx="18" cy="36" rx="8" ry="5" fill="#c49490"/><rect x="12" y="48.5" width="6" height="1.8" fill="#5a3c3c"/><rect x="26" y="48.5" width="6" height="1.8" fill="#5a3c3c"/><path d="M3.5 55c4 8 10 9 18 9s14-2 18-9c1.5 14-3 27-18 29-13-1-19-14-18-29z" fill="#9c4828"/><ellipse cx="22.5" cy="69" rx="4" ry="1.5" fill="#5a2a1c"/><path d="M8 24c8-10 24-10 32-1 4 5 4 30 3 44" fill="none" stroke="#5a5052" stroke-width="2.2"/><path d="M42 60c8 2 14 6 20.5 12v20.9H24c8-8 16-17 18-32.9z" fill="#6b6b63"/><path d="M0 52c2 10 4 18 10 26 5 6 10 10 14 14.9H0z" fill="#48423e"/></g><text x="14.3" y="80" font-size="2.9" font-weight="700" fill="#fff" textLength="32.4" font-family="Liberation Sans, sans-serif">DON’T CUT RATIONAL</text><text x="26" y="84.2" font-size="2.9" font-weight="700" fill="#fff" font-family="Liberation Sans, sans-serif">LOGIC</text></svg>
<svg style="left:383.3px;top:137.7px;border-radius:2.5px" width="62.5" height="92.9" viewBox="0 0 62.5 92.9"><rect width="62.5" height="92.9" fill="#68673f"/><g style="filter:blur(0.5px)"><rect width="62.5" height="92.9" fill="#68673f"/><path d="M0 0h24c0 8-2 16-8 19H0z" fill="#5e4c24"/><path d="M4 4h10v8H4z" fill="#6e5c2c"/><path d="M0 19h16v36L0 62z" fill="#8c8c7b"/><path d="M46 0h16.5v30H50z" fill="#74734e"/><path d="M0 92.9c0-22 4-40 18-46l15-6 15 5c9 3 14 8 14.5 18v30z" fill="#4a4a27"/><path d="M16 44l14-4 20 2 12.5 6v16l-6 4-4 0-2 4H30l-6-4-8-6z" fill="#5c5c72"/><path d="M28 68h22v6H34z" fill="#545468"/><path d="M24 36c4 4 14 4 20 0l2 6c-6 4-18 4-24 0z" fill="#4a4a26"/><ellipse cx="33.4" cy="19.5" rx="11" ry="16" fill="#c39b7f"/><path d="M22 16c0-14 22-16 23-2-7-4-16-4-23 2z" fill="#4a3c30"/><path d="M24 18h18" stroke="#3a2a20" stroke-width="1.3"/><path d="M27 30c4 5 10 5 13 0 0 5-3 7.5-6.5 7.5S27 35 27 30z" fill="#9c8878"/><ellipse cx="34" cy="28" rx="3" ry="2.2" fill="#5a2a22"/><path d="M0 92.9V74c8-2 18 4 30 4s24-6 32.5-2v16.9z" fill="#3e3e20"/><path d="M0 56c4 6 4 24 2 36.9H0z" fill="#2a2a20"/></g><text x="17.3" y="82.3" font-size="3.3" font-weight="700" fill="#fff" textLength="9" font-family="Liberation Sans, sans-serif">WHY</text><text x="27.8" y="82.6" font-size="4" font-weight="700" fill="#e0281e" font-family="Liberation Sans, sans-serif">IS</text><text x="34" y="82.3" font-size="3.3" font-weight="700" fill="#fff" textLength="10.2" font-family="Liberation Sans, sans-serif">THAT</text></svg>
<span style="top:234.23px;font-size:3.35px;color:#1a1a1a;font-weight:700;left:117.1px;letter-spacing:-0.135px;">Which Emotion Does Your</span>
<span style="top:239.99px;font-size:3.42px;color:#1a1a1a;font-weight:700;left:117.1px;letter-spacing:-0.054px;">Brand Create?</span>
<span style="top:246.82px;font-size:3.3px;color:#6a6a6a;left:117.1px;letter-spacing:0.036px;">441 views</span>
<span style="top:236.49px;font-size:4.4px;color:#555;left:174.9px;">⋮</span>
<span style="top:234.2px;font-size:3.4px;color:#1a1a1a;font-weight:700;left:183.7px;letter-spacing:-0.052px;">Emotional branding!</span>
<span style="top:239.9px;font-size:3.58px;color:#1a1a1a;font-weight:700;left:183.7px;letter-spacing:-0.052px;">#marketing #branding ...</span>
<span style="top:246.82px;font-size:3.3px;color:#6a6a6a;left:183.7px;letter-spacing:0.045px;">1.4K views</span>
<span style="top:236.49px;font-size:4.4px;color:#555;left:241.5px;">⋮</span>
<span style="top:234.22px;font-size:3.36px;color:#1a1a1a;font-weight:700;left:250.2px;letter-spacing:-0.052px;">Emotional Branding:</span>
<span style="top:239.95px;font-size:3.49px;color:#1a1a1a;font-weight:700;left:250.2px;letter-spacing:-0.052px;">Connecting Through ...</span>
<span style="top:246.82px;font-size:3.3px;color:#6a6a6a;left:250.2px;">3 views</span>
<span style="top:236.49px;font-size:4.4px;color:#555;left:308px;">⋮</span>
<span style="top:234.17px;font-size:3.46px;color:#1a1a1a;font-weight:700;left:316.8px;letter-spacing:-0.052px;">Emotional vs Rational</span>
<span style="top:240.01px;font-size:3.39px;color:#1a1a1a;font-weight:700;left:316.8px;letter-spacing:-0.048px;">Marketing: Unlocking ...</span>
<span style="top:246.82px;font-size:3.3px;color:#6a6a6a;left:316.8px;letter-spacing:-0.019px;">152 views</span>
<span style="top:236.49px;font-size:4.4px;color:#555;left:374.6px;">⋮</span>
<span style="top:234.23px;font-size:3.35px;color:#1a1a1a;font-weight:700;left:383.3px;letter-spacing:-0.081px;">Can Emotions Transform</span>
<span style="top:239.98px;font-size:3.45px;color:#1a1a1a;font-weight:700;left:383.3px;letter-spacing:-0.049px;">Our Connection with ...</span>
<span style="top:246.82px;font-size:3.3px;color:#6a6a6a;left:383.3px;letter-spacing:0.021px;">49 views</span>
<span style="top:236.49px;font-size:4.4px;color:#555;left:441.1px;">⋮</span>
<span style="top:260.12px;font-size:3.54px;color:#222;font-weight:700;left:269.3px;letter-spacing:-0.064px;">Show more</span>
<svg style="left:290.2px;top:260.6px" width="4" height="2.6" viewBox="0 0 10 6"><path d="M1 1l4 4 4-4" fill="none" stroke="#333" stroke-width="1.1"/></svg>
<div style="left:0px;top:272.8px;width:503.7px;height:11.5px;background:#05070a;"></div>
<div style="left:65.2px;top:272.8px;width:10.4px;height:11.5px;background:#2c2c2e;"></div>
<div style="left:2.6px;top:275.6px;width:5.6px;height:5.6px;background:#f0f0f0;border-radius:1.2px;"></div>
<div style="left:15.8px;top:275.6px;width:5.6px;height:5.6px;background:#9a9a9a;border-radius:1.2px;"></div>
<div style="left:28.2px;top:275.6px;width:5.6px;height:5.6px;background:#8e8e8e;border-radius:1.2px;"></div>
<div style="left:41px;top:275.6px;width:5.6px;height:5.6px;background:#2a86d8;border-radius:50%;"></div>
<div style="left:54.2px;top:275.6px;width:5.6px;height:5.6px;background:#e8c850;border-radius:1.2px;"></div>
<div style="left:67.2px;top:275.6px;width:5.6px;height:5.6px;background:#e84a30;border-radius:50%;"></div>
<div style="left:80.2px;top:275.6px;width:5.6px;height:5.6px;background:#d8d8d8;border-radius:50%;"></div>
<div style="left:92.7px;top:275.6px;width:5.6px;height:5.6px;background:#2a7ae0;border-radius:50%;"></div>
<div style="left:105.2px;top:275.6px;width:5.6px;height:5.6px;background:#5a60d8;border-radius:1.2px;"></div>
<div style="left:118.2px;top:275.6px;width:5.6px;height:5.6px;background:#7ab0e8;border-radius:1.2px;"></div>
<div style="left:130.7px;top:275.6px;width:5.6px;height:5.6px;background:#7ab0e8;border-radius:1.2px;"></div>
<div style="left:5.1px;top:278.1px;width:0.6px;height:0.6px;background:#05070a;"></div>
<div style="left:2.6px;top:278.1px;width:5.6px;height:0.6px;background:#05070a;"></div>
<div style="left:5.1px;top:275.6px;width:0.6px;height:5.6px;background:#05070a;"></div>
<div style="left:68.6px;top:277px;width:2.8px;height:2.8px;background:#f4d030;border-radius:50%;"></div>
<div style="left:81.6px;top:277px;width:2.8px;height:2.8px;background:#3a8ae0;border-radius:50%;"></div>
<div style="left:65.5px;top:283.3px;width:9px;height:0.7px;background:#7ab0e8;"></div>
<div style="left:103.5px;top:283.3px;width:9px;height:0.7px;background:#7ab0e8;"></div>
<div style="left:116.5px;top:283.3px;width:9px;height:0.7px;background:#7ab0e8;"></div>
<div style="left:129px;top:283.3px;width:9px;height:0.7px;background:#7ab0e8;"></div>
<span style="top:274.96px;font-size:2.8px;color:#e8e8e8;left:476.5px;">1:39 PM</span>
<span style="top:278.86px;font-size:2.8px;color:#e8e8e8;left:475.6px;">9/15/2025</span>
<span style="top:276.96px;font-size:3px;color:#e0e0e0;left:456px;">^ ▢ ))</span>
<div style="left:492.6px;top:276.6px;width:3.4px;height:2.8px;background:transparent;border:0.5px solid #ddd;"></div>
</div>
</div>
</body></html>
